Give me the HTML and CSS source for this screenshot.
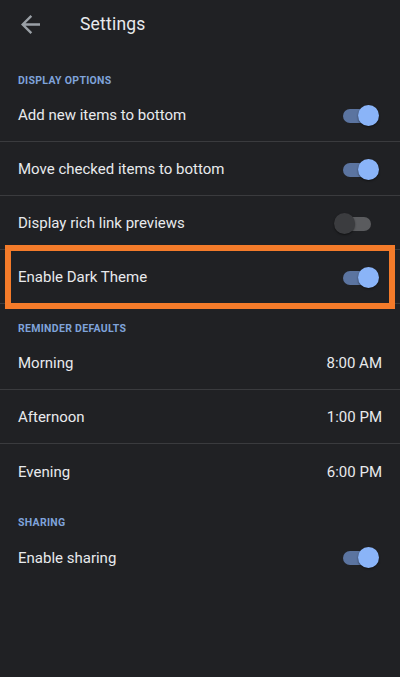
FILE: index.html
```html
<!DOCTYPE html>
<html>
<head>
<meta charset="utf-8">
<link rel="stylesheet" href="styles.css">
</head>
<body>
<div class="app">
  <header class="topbar">
    <svg class="back" width="19" height="19" viewBox="4 4 16 16"><path d="M20 11H7.83l5.59-5.59L12 4l-8 8 8 8 1.41-1.41L7.83 13H20v-2z" fill="#9aa0a6"/></svg>
    <h1 class="title">Settings</h1>
  </header>

  <div class="section-title">DISPLAY OPTIONS</div>
  <div class="row"><span class="label">Add new items to bottom</span><span class="toggle on"><span class="track"></span><span class="thumb"></span></span></div>
  <div class="row"><span class="label">Move checked items to bottom</span><span class="toggle on"><span class="track"></span><span class="thumb"></span></span></div>
  <div class="row"><span class="label">Display rich link previews</span><span class="toggle"><span class="track"></span><span class="thumb"></span></span></div>
  <div class="row highlighted"><span class="label">Enable Dark Theme</span><span class="toggle on"><span class="track"></span><span class="thumb"></span></span><span class="highlight"></span></div>

  <div class="section-title">REMINDER DEFAULTS</div>
  <div class="row"><span class="label">Morning</span><span class="value">8:00 AM</span></div>
  <div class="row"><span class="label">Afternoon</span><span class="value">1:00 PM</span></div>
  <div class="row last"><span class="label">Evening</span><span class="value">6:00 PM</span></div>

  <div class="section-title">SHARING</div>
  <div class="row last"><span class="label">Enable sharing</span><span class="toggle on"><span class="track"></span><span class="thumb"></span></span></div>
</div>
</body>
</html>
```
FILE: styles.css
```css
html, body {
  margin: 0;
  padding: 0;
  background: #202124;
}
body {
  font-family: Roboto, "Noto Sans", Arial, sans-serif;
  color: #e8eaed;
  width: 400px;
  height: 677px;
  overflow: hidden;
}
.app {
  display: flex;
  flex-direction: column;
}
.topbar {
  height: 48px;
  margin-bottom: 8px;
  display: flex;
  align-items: center;
  padding-left: 21px;
}
.back {
  display: block;
}
.title {
  margin: 0 0 0 40px;
  font-size: 17.5px;
  font-weight: 400;
  color: #e8eaed;
  letter-spacing: 0.2px;
}
.section-title {
  padding: 19px 18px 1px;
  line-height: 12px;
  font-size: 10.5px;
  font-weight: 700;
  letter-spacing: 0.3px;
  color: #7fa3da;
}
.row {
  height: 52px;
  border-bottom: 1px solid #3a3b3e;
  display: flex;
  align-items: center;
  justify-content: space-between;
  padding: 1px 18px 0 18px;
  font-size: 15px;
}
.row.last {
  border-bottom: none;
  height: 53px;
}
.row.highlighted {
  position: relative;
}
.label {
  color: #e8eaed;
}
.value {
  color: #e8eaed;
}
.toggle {
  position: relative;
  width: 45px;
  height: 21px;
  margin-right: 3px;
}
.track {
  position: absolute;
  left: 5px;
  top: 4px;
  width: 32px;
  height: 14px;
  border-radius: 7px;
  background: #5a5b5e;
}
.thumb {
  position: absolute;
  left: 0;
  top: 0;
  width: 21px;
  height: 21px;
  border-radius: 50%;
  background: #3b3c3f;
  box-shadow: 0 1px 2px rgba(0,0,0,0.5);
}
.toggle.on .track {
  left: 9px;
  background: #5b74a0;
}
.toggle.on .thumb {
  left: 24px;
  background: #8ab4f8;
}
.highlight {
  position: absolute;
  left: 5px;
  right: 5px;
  top: -5px;
  bottom: -6px;
  border: 6px solid #f47b2a;
  pointer-events: none;
}
```
